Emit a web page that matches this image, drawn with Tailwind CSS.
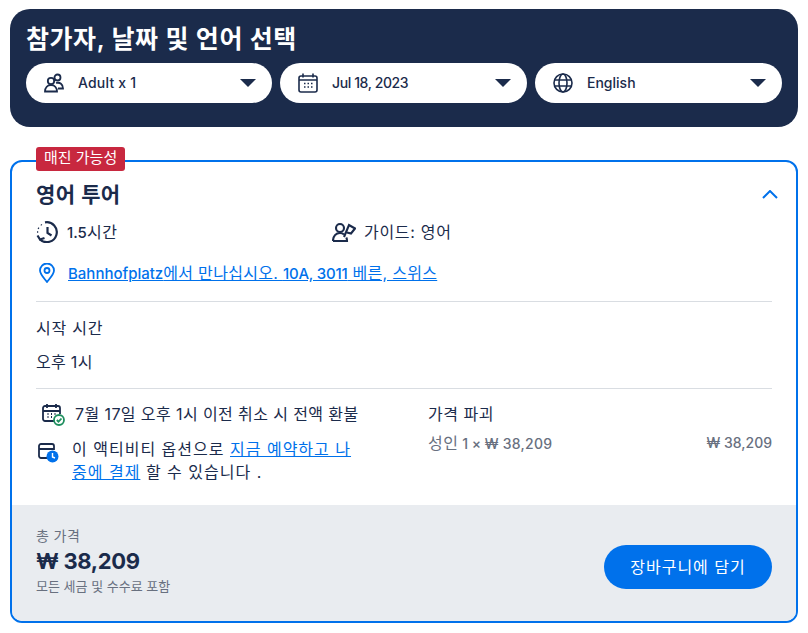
<!DOCTYPE html>
<html lang="ko">
<head>
  <meta charset="UTF-8" />
  <title>Tour options</title>
  <script src="https://cdn.jsdelivr.net/npm/@tailwindcss/browser@4"></script>
</head>
<body class="bg-white text-[#1b2b4b] font-['Inter','Noto_Sans_CJK_KR',sans-serif]">
<div class="w-[808px] h-[633px] overflow-hidden px-[10px] pt-[9px]">

  <!-- Selector header -->
  <section class="h-[118px] w-[788px] rounded-[20px] bg-[#1b2b4b] px-4 pt-[13px]">
    <h2 class="text-[25px] leading-[34px] font-semibold tracking-[0.55px] text-white">참가자, 날짜 및 언어 선택</h2>
    <div class="mt-[7px] flex gap-2">
      <div class="flex h-10 w-[246px] items-center rounded-full bg-white pl-[18px] pr-4">
        <svg class="h-[20px] w-[20px] shrink-0" viewBox="0 0 20 20" fill="none" stroke="#1b2b4b" stroke-width="1.8">
          <circle cx="13.500" cy="4.500" r="3"/><path d="M12 10c4-1 7 1 7 5.500h-5"/>
          <circle cx="7" cy="8" r="3.200"/><path d="M1 18.500c0-4 2.500-6.500 6-6.500s6 2.500 6 6.500z"/>
        </svg>
        <span class="ml-[14px] -translate-y-px text-[14px] font-medium tracking-[0.2px]">Adult x 1</span>
        <svg class="ml-auto h-2 w-4" viewBox="0 0 16 8" fill="#1b2b4b"><path d="M0 0h16l-8 8z"/></svg>
      </div>
      <div class="flex h-10 w-[247px] items-center rounded-full bg-white pl-[18px] pr-4">
        <svg class="h-[20px] w-[20px] shrink-0" viewBox="0 0 20 20" fill="none" stroke="#1b2b4b" stroke-width="1.6">
          <rect x="1" y="3" width="18" height="16" rx="2"/><path d="M5 0.500v4M15 0.500v4M1 7h18"/>
          <path d="M6 10.500h1.500M9.500 10.500h1.500M13 10.500h1.500M6 14h1.500M9.500 14h1.500M13 14h1.500" stroke-width="1.300"/>
        </svg>
        <span class="ml-[14px] -translate-y-px text-[14px] font-medium tracking-[-0.4px]">Jul 18, 2023</span>
        <svg class="ml-auto h-2 w-4" viewBox="0 0 16 8" fill="#1b2b4b"><path d="M0 0h16l-8 8z"/></svg>
      </div>
      <div class="flex h-10 w-[247px] items-center rounded-full bg-white pl-[18px] pr-4">
        <svg class="h-[20px] w-[20px] shrink-0" viewBox="0 0 20 20" fill="none" stroke="#1b2b4b" stroke-width="1.6">
          <circle cx="10" cy="10" r="9"/><ellipse cx="10" cy="10" rx="4" ry="9"/><path d="M1.500 7h17M1.500 13h17"/>
        </svg>
        <span class="ml-[14px] -translate-y-px text-[14px] font-medium">English</span>
        <svg class="ml-auto h-2 w-4" viewBox="0 0 16 8" fill="#1b2b4b"><path d="M0 0h16l-8 8z"/></svg>
      </div>
    </div>
  </section>

  <!-- Option card -->
  <section class="relative mt-[33px] h-[463px] w-[788px] rounded-xl border-2 border-[#0071eb]">
    <span class="absolute -top-[15px] left-[24px] rounded-[3px] bg-[#c8283f] px-2 pb-[2px] text-[15px] leading-[22px] text-white">매진 가능성</span>

    <div class="px-6 pt-[19px]">
      <div class="flex items-center justify-between">
        <h3 class="text-[21px] leading-[28px] font-semibold tracking-[0.4px]">영어 투어</h3>
        <svg class="-mr-1.5 -translate-y-px h-[9px] w-4" viewBox="0 0 16 9" fill="none" stroke="#0071eb" stroke-width="2"><path d="M1 8l7-7 7 7"/></svg>
      </div>

      <div class="mt-[11px] flex h-6 items-center text-[16px] tracking-[0.7px]">
        <div class="flex w-[296px] items-center">
          <svg class="h-[22px] w-[22px]" viewBox="0 0 22 22" fill="none" stroke="#1b2b4b" stroke-width="2.200">
            <path d="M9 1.300A10 10 0 1 1 4 18.500"/><path d="M11.500 6v6l4 2.500"/>
            <path d="M1.500 14.500l2.500 4 4.500-1.500"/>
            <path d="M1 11h1.200M2 7l1 .6M5 3.500l.7.7" stroke-width="1.600"/>
          </svg>
          <span class="ml-[9px]"><span class="text-[15px] font-medium tracking-normal">1.5</span>시간</span>
        </div>
        <svg class="h-[20px] w-6" viewBox="0 0 24 20" fill="none" stroke="#1b2b4b" stroke-width="2.100">
          <circle cx="8" cy="6" r="4"/><path d="M1 19c0-5 3-8 7-8 1.500 0 3 .5 4 1.500"/><path d="M1 19h14c0-1.500-.2-2.500-.7-3.500"/>
          <path d="M12 15L17 3l6 3.500-4 5-4-1"/>
        </svg>
        <span class="ml-2">가이드: 영어</span>
      </div>

      <div class="mt-[17px] flex h-6 items-center text-[16px] tracking-[0.3px]">
        <svg class="ml-[3px] h-[20px] w-4" viewBox="0 0 16 20" fill="none" stroke="#0071eb" stroke-width="1.800">
          <path d="M8 19C4 14 1 11 1 7.500a7 7 0 0 1 14 0C15 11 12 14 8 19z"/><circle cx="8" cy="7.500" r="2.500"/>
        </svg>
        <a href="#" class="ml-[13px] text-[#0071eb] underline"><span class="text-[15px] font-medium tracking-normal">Bahnhofplatz</span>에서 만나십시오. <span class="text-[15px] font-medium tracking-[-0.2px]">10A, 3011</span> 베른, 스위스</a>
      </div>

      <hr class="mt-4 border-[#d9dde2]" />
      <p class="mt-[15px] text-[16px] leading-[22px] tracking-[0.8px]">시작 시간</p>
      <p class="mt-3 text-[16px] leading-[22px] tracking-[0.3px]">오후 1시</p>
      <hr class="mt-[15px] border-[#d9dde2]" />

      <div class="mt-[13px] flex">
        <div class="w-[392px] text-[16px]">
          <div class="flex h-[24px] items-center">
            <svg class="ml-[6px] h-[23px] w-[23px] shrink-0" viewBox="0 0 23 23" fill="none" stroke="#1b2b4b" stroke-width="1.800">
              <path d="M13 18H3a2 2 0 0 1-2-2V5a2 2 0 0 1 2-2h13a2 2 0 0 1 2 2v6"/>
              <path d="M5 1v4M14 1v4M1 8h17M5.500 11h1M9 11h1M12.500 11h1M5.500 14h1M9 14h1"/>
              <circle cx="17" cy="17" r="5" fill="#fff" stroke="#1e8e5e"/><path d="M14.800 17l1.700 1.700 3-3.200" stroke="#1e8e5e"/>
            </svg>
            <span class="ml-[10px] tracking-[0.4px]">7월 17일 오후 1시 이전 취소 시 전액 환불</span>
          </div>
          <div class="mt-[12px] flex">
            <svg class="mt-[5px] ml-[2px] h-[20px] w-[21px] shrink-0" viewBox="0 0 21 20" fill="none" stroke="#1b2b4b" stroke-width="1.800">
              <path d="M9 15H3a2 2 0 0 1-2-2V3a2 2 0 0 1 2-2h11a2 2 0 0 1 2 2v4M1 6h15"/>
              <circle cx="14.500" cy="13.500" r="6" fill="#0071eb" stroke="none"/><path d="M14.500 10v4l2.500 1" stroke="#fff" stroke-width="1.400"/>
            </svg>
            <p class="ml-[13px] leading-[23px] tracking-[1px]">이 액티비티 옵션으로 <a href="#" class="text-[#0071eb] underline">지금 예약하고 나<br />중에 결제</a> 할 수 있습니다 .</p>
          </div>
        </div>
        <div class="flex-1">
          <p class="text-[16px] leading-[24px] tracking-[0.5px]">가격 파괴</p>
          <div class="mt-[5px] flex justify-between text-[14px] leading-[24px] font-medium text-[#68707f]">
            <span><span class="text-[16px] font-normal tracking-[0.5px]">성인</span> 1 × <span class="tracking-[0.25px]">₩ 38,209</span></span>
            <span>₩ 38,209</span>
          </div>
        </div>
      </div>
    </div>

    <!-- Total footer -->
    <div class="absolute inset-x-0 bottom-0 flex h-[116px] items-center justify-between rounded-b-[10px] bg-[#e9ecf0] px-6">
      <div class="-translate-y-[2px]">
        <p class="text-[14px] leading-[18px] tracking-[0.4px] text-[#68707f]">총 가격</p>
        <p class="mt-[2px] text-[22px] leading-[28px] font-bold tracking-[-0.35px]">₩ 38,209</p>
        <p class="mt-[2px] text-[13px] leading-[18px] text-[#68707f]">모든 세금 및 수수료 포함</p>
      </div>
      <button class="mt-2 h-11 w-[168px] rounded-full bg-[#0071eb] text-[16px] tracking-[1px] text-white">장바구니에 담기</button>
    </div>
  </section>
</div>
</body>
</html>
